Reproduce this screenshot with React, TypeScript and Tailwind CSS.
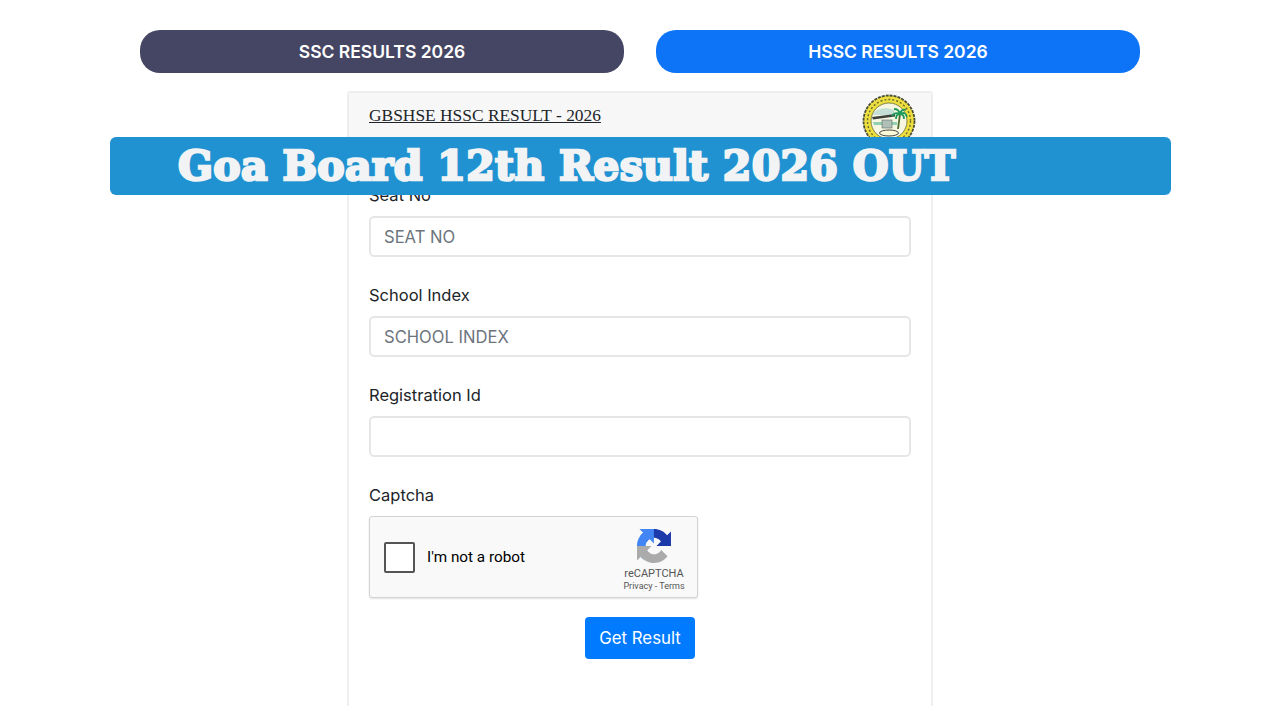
const inter = "font-['Inter','Liberation_Sans',sans-serif]"

function Seal() {
  return (
    <svg width="54" height="56" viewBox="0 0 54 56" className="block">
      <circle cx="27" cy="28" r="25.500" fill="#ecdf3e" stroke="#4a4d34" strokeWidth="1.800" strokeDasharray="3 1" />
      <circle cx="27" cy="28" r="21.500" fill="none" stroke="#6b6b30" strokeWidth="1.400" strokeDasharray="2 2" />
      <circle cx="27" cy="28" r="18" fill="#f6f6e2" stroke="#6a6a30" strokeWidth="0.800" />
      <path d="M12 19c5-4 13-5 20-2l1 5H11z" fill="#c4dfd6" />
      <path d="M10 24l23-3v2.500l-22 3z" fill="#3b423c" />
      <path d="M11 29h24v3H12z" fill="#8fd0b2" />
      <path d="M36 36l2-15" stroke="#4d6b2c" strokeWidth="1.800" />
      <path d="M38 21c-4-2-6-1-8 2M38 21c4-2 6-1 7 3M38 21c-1-4-3-5-6-5M38 21c1-4 3-5 6-4M38 21c-3 0-4 2-4 5M38 21c3 0 4 2 4 5" stroke="#1f9a5a" strokeWidth="1.800" fill="none" />
      <rect x="20" y="27" width="10" height="8" fill="#b0bfb8" stroke="#5a6a60" strokeWidth="0.600" />
      <ellipse cx="27" cy="40" rx="9.500" ry="3" fill="#fbf9d8" stroke="#333" strokeWidth="0.900" />
    </svg>
  )
}

function RecaptchaIcon() {
  return (
    <svg width="34" height="34" viewBox="0 0 64 64" className="block">
      <path d="M64 31.955l-.033-1.370V4.687l-7.160 7.160C50.948 4.674 42.033.093 32.050.093c-10.400 0-19.622 4.958-25.458 12.635l11.736 11.860a15.550 15.550 0 0 1 4.754-5.334c2.050-1.600 4.952-2.906 8.968-2.906.485 0 .86.057 1.135.163 4.976.393 9.288 3.140 11.828 7.124l-8.307 8.307c10.522-.04 22.400-.066 27.295.006" fill="#1c3aa9" />
      <path d="M31.862.001l-1.370.033H4.594l7.160 7.160C4.580 13.053 0 21.968 0 31.950c0 10.400 4.958 19.622 12.635 25.458l11.860-11.736a15.550 15.550 0 0 1-5.334-4.754c-1.600-2.050-2.906-4.952-2.906-8.968 0-.485.057-.86.163-1.135.393-4.976 3.140-9.288 7.124-11.828l8.307 8.307c-.04-10.522-.066-22.400.006-27.295" fill="#4285f4" />
      <path d="M.001 32l.033 1.370v25.898l7.160-7.160c5.858 7.173 14.774 11.753 24.756 11.753 10.400 0 19.622-4.958 25.458-12.635l-11.736-11.860a15.550 15.550 0 0 1-4.754 5.334c-2.050 1.600-4.952 2.906-8.968 2.906-.485 0-.86-.057-1.135-.163-4.976-.393-9.288-3.140-11.828-7.124l8.307-8.307c-10.522.04-22.400.066-27.295-.006" fill="#ababab" />
    </svg>
  )
}

function Field({ label, placeholder }: { label: string; placeholder?: string }) {
  return (
    <div className="h-[100px]">
      <label className="block h-[31px] text-[16.500px] leading-[20px] text-[#212529]">{label}</label>
      <input
        placeholder={placeholder}
        className="block h-[41px] w-full rounded-[5px] border-2 border-[#e6e6e6] bg-white px-[13px] text-[16.600px] placeholder:text-[#6c757d]"
      />
    </div>
  )
}

export default function App() {
  return (
    <div className={`relative h-[720px] w-[1280px] overflow-hidden bg-white ${inter}`}>
      <div className="flex gap-[32px] px-[140px] pt-[30px]">
        <button className="h-[43px] w-[484px] rounded-[20px] bg-[#454663] pt-[1px] text-[17.500px] font-semibold text-white">
          SSC RESULTS 2026
        </button>
        <button className="h-[43px] w-[484px] rounded-[20px] bg-[#0d74f7] pt-[1px] text-[17.500px] font-semibold text-white">
          HSSC RESULTS 2026
        </button>
      </div>

      <div className="mx-auto mt-[18px] h-[615px] w-[586px] rounded-t-[3px] border-x-2 border-t-2 border-[#eeeeee]">
        <div className="flex h-[88px] justify-between bg-[#f7f7f7] pl-[20px] pr-[15px] pt-[11px]">
          <span className="font-['Liberation_Serif',serif] text-[17.400px] leading-[22px] text-[#212529] underline">
            GBSHSE HSSC RESULT - 2026
          </span>
          <div className="-mt-[11px]">
            <Seal />
          </div>
        </div>

        <div className="px-[20px] pt-[4px]">
          <Field label="Seat No" placeholder="SEAT NO" />
          <Field label="School Index" placeholder="SCHOOL INDEX" />
          <Field label="Registration Id" />
          <label className="block h-[31px] text-[16.500px] leading-[20px] text-[#212529]">Captcha</label>
          <div className="flex h-[82px] w-[329px] items-center rounded-[3px] border border-[#d3d3d3] bg-[#f9f9f9] pl-[14px] pr-[11px] shadow-[0_1px_2px_rgba(0,0,0,0.12)]">
            <div className="h-[31px] w-[31px] rounded-[2px] border-2 border-[#555] bg-white" />
            <span className="ml-[12px] font-['Roboto',sans-serif] text-[15.300px] text-black">I'm not a robot</span>
            <div className="ml-auto flex w-[64px] flex-col items-center pt-[6px] font-['Roboto',sans-serif] text-[#555]">
              <RecaptchaIcon />
              <span className="mt-[5px] text-[11px] leading-[12px]">reCAPTCHA</span>
              <span className="whitespace-nowrap text-[9px] leading-[12px]">Privacy - Terms</span>
            </div>
          </div>
          <div className="mt-[19px] flex justify-center">
            <button className="h-[42px] w-[110px] rounded-[4px] bg-[#007bff] pt-[2px] text-[16.800px] text-white">Get Result</button>
          </div>
        </div>
      </div>

      <div className="absolute left-[110px] top-[137px] flex h-[58px] w-[1061px] items-center rounded-[6px] bg-[#2092d1] pl-[68px]">
        <span className="font-['DejaVu_Serif',serif] text-[41px] font-bold leading-none tracking-[0.3px] text-[#f1f3f4] [-webkit-text-stroke:2.500px_#f1f3f4]">
          Goa Board 12th Result 2026 OUT
        </span>
      </div>
    </div>
  )
}
